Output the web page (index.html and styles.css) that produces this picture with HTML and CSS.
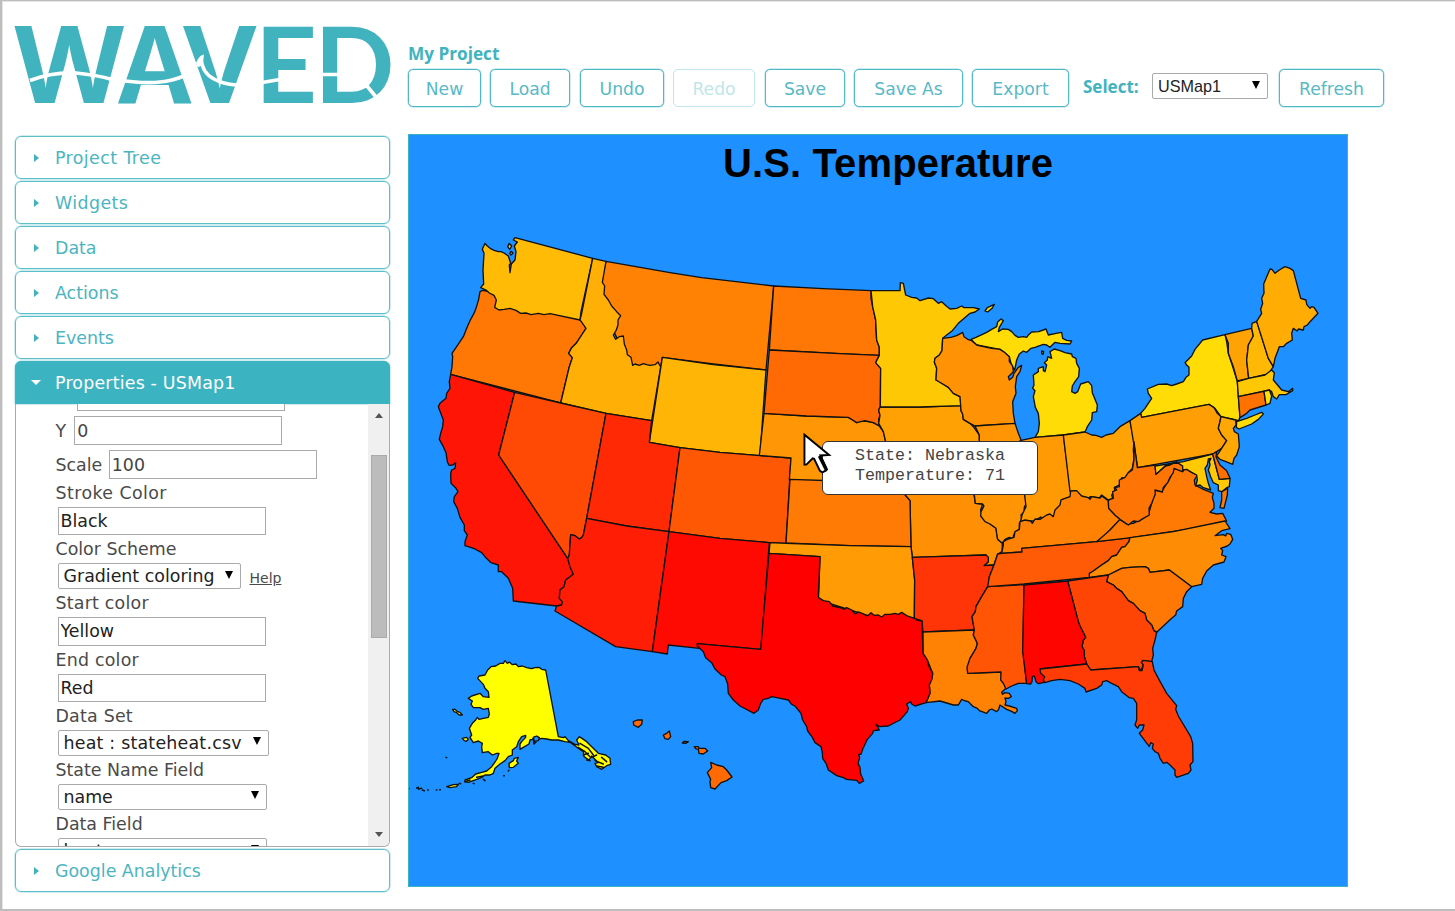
FILE: index.html
```html
<!DOCTYPE html>
<html lang="en">
<head>
<meta charset="utf-8">
<title>WAVED</title>
<link rel="stylesheet" href="styles.css">
</head>
<body>
<div class="page">
  <aside class="sidebar">
    <svg class="logo" viewBox="15 24 376 82" role="img" aria-label="WAVED">
      <g class="logo-text">
        <text class="slanted" x="14.500" y="102.700" textLength="109.500" lengthAdjust="spacingAndGlyphs">W</text>
        <text class="slanted" x="118" y="102.700" textLength="73.500" lengthAdjust="spacingAndGlyphs">A</text>
        <text class="slanted" x="183" y="102.700" textLength="73.500" lengthAdjust="spacingAndGlyphs">V</text>
        <text x="255" y="102.700" textLength="62" lengthAdjust="spacingAndGlyphs">E</text>
        <text x="314.500" y="102.700" textLength="80" lengthAdjust="spacingAndGlyphs">D</text>
      </g>
      <g class="logo-wave">
        <path d="M30 80.500Q52 72 76 73Q97 75 112 79.500Q145 84 160 82Q172 81 184 76"/>
        <path d="M201 58Q202 73 214 79Q223 84 236 85"/>
        <path d="M262 82.500L280 79.500M322 74.500H340M367 86L376 97"/>
      </g>
      <path class="logo-crest" d="M196 63Q199 55 204 54.500L203 62Q200 69 197 66Z"/>
    </svg>
    <nav class="accordion">
      <div class="head wide"><i class="caret"></i>Project Tree</div>
      <div class="head wide"><i class="caret"></i>Widgets</div>
      <div class="head"><i class="caret"></i>Data</div>
      <div class="head"><i class="caret"></i>Actions</div>
      <div class="head"><i class="caret"></i>Events</div>
      <section class="open">
        <div class="head active"><i class="caret down"></i>Properties - USMap1</div>
        <div class="panel">
          <div class="form">
            <div class="row"><input class="x" type="text" value=""></div>
            <div class="row">Y <input class="y" type="text" value="0"></div>
            <div class="row">Scale <input class="scale" type="text" value="100"></div>
            <label class="wide">Stroke Color</label>
            <input type="text" value="Black">
            <label>Color Scheme</label>
            <div class="pair"><div class="select scheme">Gradient coloring<i></i></div><a class="help">Help</a></div>
            <label class="mid">Start color</label>
            <input type="text" value="Yellow">
            <label class="mid">End color</label>
            <input type="text" value="Red">
            <label class="mid">Data Set</label>
            <div class="select dataset mid">heat : stateheat.csv<i></i></div>
            <label>State Name Field</label>
            <div class="select field">name<i></i></div>
            <label>Data Field</label>
            <div class="select field">heat<i></i></div>
          </div>
          <div class="scrollbar"><i class="up"></i><span class="thumb"></span><i class="dn"></i></div>
        </div>
      </section>
      <div class="head"><i class="caret"></i>Google Analytics</div>
    </nav>
  </aside>
  <main class="main">
    <h1 class="project">My Project</h1>
    <div class="toolbar">
      <button class="b-new">New</button>
      <button class="b-load">Load</button>
      <button class="b-undo">Undo</button>
      <button class="b-redo" disabled>Redo</button>
      <button class="b-save">Save</button>
      <button class="b-saveas">Save As</button>
      <button class="b-export">Export</button>
      <b class="pick">Select:</b>
      <div class="select picker">USMap1<i></i></div>
      <button class="b-refresh">Refresh</button>
    </div>
    <div class="canvas">
      <svg class="map" viewBox="409 135 938 751">
        <text class="title" x="723" y="177" textLength="330">U.S. Temperature</text>
        <!-- West -->
        <g class="states" transform="translate(430 220) scale(.33333)">
          <path fill="#ff7805" d="M150 215L158 211 170 213 300 240 455 298 468 325 455 345 440 368 425 383 416 400 427 413 418 440 392 549 62 463 66 440 68 410 66 400 84 374 100 350 112 320 122 298 133 278 138 265 146 238Z"/>
          <path fill="#ffbb05" d="M165 70L172 78 182 86 192 91 205 95 213 95 222 99 235 108 242 130 238 135 240 158 244 132 255 120 258 95 253 78 262 66 250 60 255 53 488 115 453 275 450 300 360 281 342 284 325 280 303 284 288 279 272 280 258 271 240 265 222 268 207 270 194 262 199 240 192 226 178 219 168 210 152 203 161 192 159 150 162 100 157 88ZM238 70L245 78 239 88 233 80ZM243 94L249 99 243 105 239 100Z"/>
          <path fill="#ff8205" d="M528 124L720 158 815 173 1031 198 1008 450 850 432 697 412 692 441 608 450 500 230Z"/>
          <path fill="#ffaf05" d="M488 115L528 124 517 187 524 198 522 223 535 240 545 258 560 275 572 287 564 300 564 315 558 332 550 345 557 358 568 350 580 348 583 372 590 390 592 404 603 412 608 436 615 432 628 436 640 431 650 434 660 436 675 434 684 426 692 441 665 602 528 580 392 549 418 440 427 413 416 400 425 383 440 368 455 345 468 325 456 308 450 300 455 280Z"/>
          <path fill="#ffb505" d="M697 412L850 434 1008 450 990 707 870 697 750 683 658 667Z"/>
          <path fill="#ff1505" d="M62 463L254 517 206 705 413 1015 420 1040 430 1063 407 1080 402 1100 390 1110 388 1135 397 1145 395 1155 380 1158 250 1143 248 1105 235 1075 215 1055 205 1055 205 1035 183 1028 165 1010 155 998 135 987 122 982 105 977 105 965 112 945 103 932 103 915 90 892 82 865 71 845 73 830 84 815 78 805 63 790 62 760 65 750 75 745 77 728 68 735 57 736 52 725 48 698 40 680 28 658 32 640 38 620 40 600 25 560 30 550 48 535 50 520 60 505 58 485Z"/>
          <path fill="#ff4a05" d="M254 517L392 549 528 580 470 895 460 945 455 953 448 957 435 947 422 944 418 1005 413 1015 206 705Z"/>
          <path fill="#ff2a05" d="M528 580L665 602 658 667 750 683 717 935 590 918 470 895Z"/>
          <path fill="#ff5805" d="M750 683L870 697 990 707 1083 714 1068 970 1018 968 870 955 717 935Z"/>
          <path fill="#ff1e05" d="M470 895L590 918 717 935 667 1295 557 1280 375 1173 380 1158 395 1155 397 1145 388 1135 390 1110 402 1100 407 1080 430 1063 420 1040 413 1015 418 1005 422 944 435 947 448 957 455 953 460 945Z"/>
          <path fill="#ff0a02" d="M717 935L870 955 1018 968 993 1288 802 1271 808 1285 715 1275 712 1302 667 1295Z"/>
        </g>
        <!-- Plains, Midwest and Gulf -->
        <g class="states" transform="translate(740 260) scale(.33333)">
          <path fill="#ff7805" d="M101 78L250 86 393 92 393 115 398 140 407 180 408 210 410 240 418 262 418 286 300 281 88 270Z"/>
          <path fill="#ff9605" d="M72 460L200 468 325 472 340 480 350 488 358 484 375 483 400 488 418 498 430 515 437 545 445 600 500 700 148 660 153 594 58 586Z"/>
          <path fill="#ff6a05" d="M88 270L300 281 418 286 407 308 422 325 421 440 416 450 420 466 416 478 418 498 400 488 375 482 350 488 325 472 200 468 72 460Z"/>
          <path fill="#ffa005" d="M421 441L540 441 663 437 663 452 668 462 670 478 690 490 700 500 718 525 720 600 690 650 450 640 437 545 430 515 416 490 420 466 416 450Z"/>
          <path fill="#ff9005" d="M450 640L690 640 703 710 706 730 728 732 722 750 728 775 750 792 768 805 773 838 787 850 786 875 773 882 762 915 732 917 745 905 738 885 517 892 513 860 510 722 495 705Z"/>
          <path fill="#ff7b05" d="M150 658L300 663 490 668 495 705 510 722 513 860 330 857 138 849Z"/>
          <path fill="#ff9b05" d="M90 848L138 850 330 857 513 860 517 892 524 960 523 1075 500 1070 425 1080 235 1020 240 890 87 880Z"/>
          <path fill="#ff3508" d="M517 892L738 885 745 892 745 905 732 917 762 915 748 950 747 970 743 980 725 1010 708 1040 706 1055 696 1070 703 1110 549 1116 546 1083 523 1075 524 960Z"/>
          <path fill="#ff8205" d="M549 1116L703 1110 700 1125 712 1150 708 1165 690 1195 683 1240 783 1236 785 1255 798 1285 785 1297 788 1303 795 1298 808 1300 814 1310 805 1315 795 1314 798 1325 795 1335 808 1338 830 1345 832 1352 825 1360 815 1354 800 1348 780 1335 776 1348 770 1355 755 1347 748 1350 740 1360 718 1352 712 1345 700 1340 685 1325 676 1323 665 1318 655 1335 640 1335 600 1323 558 1328 570 1300 568 1275 578 1240 562 1200 549 1180Z"/>
          <path fill="#f00" d="M87 880L240 890 235 1012 250 1022 268 1025 278 1038 305 1044 312 1048 320 1043 335 1050 346 1062 355 1056 368 1061 382 1068 393 1058 402 1066 415 1065 425 1071 435 1063 450 1063 465 1060 475 1063 485 1057 500 1067 523 1075 530 1080 546 1083 549 1180 562 1200 565 1215 578 1240 576 1258 568 1275 570 1300 558 1328 525 1338 515 1332 512 1325 500 1332 505 1345 502 1355 480 1380 445 1398 418 1400 408 1393 412 1400 418 1410 400 1412 398 1420 382 1438 368 1468 363 1483 356 1483 359 1493 354 1510 360 1522 362 1542 371 1563 358 1570 350 1561 320 1558 310 1553 290 1547 265 1530 258 1510 248 1495 247 1478 243 1460 225 1448 217 1432 203 1413 200 1400 188 1380 183 1360 165 1338 155 1333 145 1320 110 1313 95 1310 85 1315 70 1318 62 1330 55 1350 42 1360 0 1338 -20 1320 -35 1300 -37 1272 -45 1250 -56 1245 -75 1227 -85 1208 -103 1193 -110 1175 -128 1158 -128 1151 62 1168Z"/>
          <path fill="#ff5505" d="M743 980L852 974 849 1170 860 1270 835 1270 815 1278 798 1287 790 1270 782 1260 783 1236 683 1240 681 1222 690 1195 708 1165 712 1150 700 1125 703 1110 696 1070 706 1055 708 1040 725 1010Z"/>
          <path fill="#ffc805" d="M393 92L480 92 481 68 490 70 493 85 497 105 515 112 530 114 540 122 565 114 580 116 595 130 605 125 618 137 630 147 650 145 665 138 672 143 700 143 718 147 705 156 690 160 655 190 637 212 620 225 608 235 606 272 598 285 585 295 583 306 590 325 588 360 600 366 625 382 640 400 660 410 663 437 540 441 421 441 422 325 407 308 418 286 418 262 410 240 407 180 398 140Z"/>
          <path fill="#ffdc05" d="M693 238L708 232 740 217 755 208 770 200 773 186 783 177 790 182 778 202 775 215 788 207 805 208 815 215 825 226 835 232 850 230 860 232 866 224 875 216 896 215 918 207 925 225 948 220 965 217 968 235 980 241 995 243 990 252 960 250 945 247 930 262 920 255 910 253 885 262 873 265 860 277 850 273 838 282 830 300 824 330 815 318 808 290 780 268 710 255ZM735 153L742 143 763 133 757 144 743 156Z"/>
          <path fill="#ff9305" d="M608 235L632 232 650 227 668 217 672 230 683 238 695 242 710 255 730 260 755 265 780 268 795 278 808 290 808 305 818 318 820 335 805 350 808 360 818 352 822 340 835 322 845 316 840 335 830 350 826 380 828 400 818 425 820 460 825 490 705 498 690 490 670 478 668 462 663 452 660 410 640 400 625 382 588 360 590 325 583 306 585 295 598 285 606 272Z"/>
          <path fill="#ff9505" d="M705 498L825 490 835 520 845 545 855 640 855 710 860 728 853 742 852 757 843 765 845 778 838 790 838 808 824 818 820 828 822 838 808 832 795 838 787 850 773 838 770 820 768 805 750 792 735 785 722 768 723 755 732 738 728 732 706 730 703 705 718 620 718 525Z"/>
        </g>
        <!-- Northeast and Great Lakes -->
        <g class="states" transform="translate(1010 250) scale(.33333)">
          <path fill="#ffdc05" d="M120 305L133 297 150 302 165 308 185 312 187 320 198 325 200 340 208 355 206 380 195 395 187 408 185 425 195 430 203 425 212 402 235 395 245 407 247 428 262 465 260 485 247 488 245 510 232 530 225 546 160 555 75 562 85 545 88 520 85 490 76 472 70 440 75 422 68 415 72 405 70 375 85 365 85 355 100 350 100 362 105 365 110 345 103 338 112 330 113 320 125 325ZM95 303L101 305 99 313 95 311Z"/>
          <path fill="#ff9a05" d="M30 572L75 562 160 555 182 725 182 740 155 750 150 770 138 785 130 798 115 796 100 806 92 801 75 812 32 815 36 795 48 770 44 735Z"/>
          <path fill="#ffa205" d="M160 555L225 546 245 555 258 556 275 562 288 555 310 550 330 530 360 512 372 575 370 600 372 625 367 655 355 668 345 685 335 683 328 705 313 712 315 725 305 735 308 745 295 750 275 735 268 744 240 740 235 746 205 735 195 723 180 724Z"/>
          <path fill="#ffdc05" d="M395 502L392 490 405 475 425 445 415 430 412 417 445 403 470 402 485 407 500 402 520 395 528 382 537 375 537 352 530 345 525 338 545 318 555 298 578 270 645 254 650 275 655 310 668 350 682 395 690 500 686 512 677 510 633 500 615 475 597 463ZM680 515L710 505 735 495 755 487 760 492 745 508 725 522 687 537 679 532Z"/>
          <path fill="#ff9f05" d="M360 512L392 490 395 502 597 463 612 473 622 490 633 500 625 535 635 555 650 572 635 595 620 605 610 612 383 653Z"/>
          <path fill="#ffa805" d="M633 500L677 510 678 525 670 535 673 545 685 552 688 590 680 615 672 625 668 643 648 635 630 628 620 618 635 595 650 572 635 555 625 535 630 515Z"/>
          <path fill="#ffa305" d="M645 254L725 235 730 258 715 285 713 305 710 330 716 385 682 393 670 350 655 310 655 280Z"/>
          <path fill="#ffb805" d="M725 235L726 220 740 214 775 325 790 350 775 372 716 385 710 330 713 305 715 285 730 258Z"/>
          <path fill="#ffad05" d="M740 214L755 190 752 178 758 160 755 145 762 130 761 102 780 57 786 58 795 70 808 60 825 50 840 55 850 62 872 145 888 150 890 163 900 175 905 170 912 172 924 190 900 215 892 225 882 230 880 240 865 237 862 243 850 235 845 250 847 270 830 280 820 290 808 290 795 325 790 350 775 325Z"/>
          <path fill="#ffc805" d="M682 395L716 385 765 375 785 360 793 368 790 390 800 402 815 420 835 425 848 415 848 422 828 434 808 434 800 447 790 440 785 425 778 420 685 440Z"/>
          <path fill="#ff7200" d="M685 440L762 424 768 465 720 480 710 490 690 503Z"/>
          <path fill="#ffe005" d="M762 424L778 420 785 438 780 460 768 465Z"/>
        </g>
        <!-- Southeast -->
        <g class="states" transform="translate(1000 440) scale(.33333)">
          <path fill="#ff8205" d="M212 153L230 152 245 168 265 173 270 178 275 170 300 174 305 168 325 182 326 205 345 225 360 238 330 270 315 290 290 305 65 325 66 336 5 340 10 315 10 305 25 297 42 292 45 275 58 268 60 245 75 240 92 243 97 250 105 237 120 238 140 225 150 222 160 230 165 210 180 195 183 180 210 170Z"/>
          <path fill="#ff5a05" d="M5 340L66 336 65 325 290 305 390 293 387 305 375 320 365 322 350 345 335 350 325 362 305 375 280 393 268 412 72 432 -37 440 -32 410 -18 375 -7 342Z"/>
          <path fill="#ff7a05" d="M522 85L548 95 555 83 575 97 592 105 583 120 585 135 610 148 640 160 637 172 642 190 642 205 630 217 650 222 668 220 680 243 560 268 400 292 290 305 330 270 360 238 380 252 400 250 445 225 455 190 465 150 485 155 510 115ZM665 155L683 145 682 165 672 205 660 203 665 180Z"/>
          <path fill="#ff7505" d="M402 5L412 83 465 75 468 103 500 75 530 66 548 78 548 95 535 90 522 85 520 98 510 112 503 128 490 142 487 156 465 150 466 162 455 190 447 205 448 225 430 235 415 245 400 243 385 255 360 238 345 225 326 205 325 182 330 178 340 175 338 155 350 150 345 143 358 140 358 120 375 112 385 98 397 90 402 60Z"/>
          <path fill="#ff8c05" d="M390 293L520 275 675 243 690 266 665 272 645 287 670 284 677 288 680 280 692 283 698 298 690 312 682 318 662 325 668 332 665 345 678 350 672 366 640 375 620 393 608 415 605 433 575 440 508 390 450 397 445 385 435 380 390 382 365 385 325 405 268 412 268 400 280 393 305 375 325 362 335 350 350 345 365 322 375 320 387 305Z"/>
          <path fill="#ff7805" d="M325 405L365 385 390 382 435 380 445 385 450 397 508 390 575 440 560 455 550 475 548 500 530 513 527 525 515 535 470 577 462 572 455 555 440 540 435 520 420 512 400 490 385 482 365 455 350 445 340 435 320 425Z"/>
          <path fill="#ff4505" d="M203 423L325 405 320 425 340 435 350 445 365 455 385 482 400 490 420 512 435 520 440 540 455 555 462 572 470 577 465 600 458 625 460 645 455 665 428 662 430 675 422 692 415 680 272 690 260 672 253 650 253 632 246 620 250 600 257 592 240 558 235 545Z"/>
          <path fill="#ff0500" d="M72 435L203 423 235 545 240 558 257 592 250 600 246 620 253 632 253 650 260 672 120 687 135 710 130 728 115 731 108 725 103 708 97 710 96 725 92 732 80 731 68 635Z"/>
          <path fill="#ff3c05" d="M120 687L260 672 272 690 415 680 418 692 426 692 430 675 424 667 430 661 457 665 462 690 475 715 500 760 530 797 527 808 535 828 572 890 578 910 579 965 570 975 573 990 565 1000 530 1012 525 1005 525 990 510 975 500 967 490 970 480 955 475 940 465 935 457 925 460 912 452 908 448 920 418 880 428 870 432 855 418 855 413 865 405 855 410 840 410 790 400 775 388 773 365 755 355 740 335 730 320 722 308 725 305 735 290 745 258 756 255 745 235 732 210 722 180 718 155 722 135 728 130 720 134 710 122 700Z"/>
          <path fill="#ffc905" d="M465 78L550 65 638 42 658 118 690 115 688 140 680 143 665 155 655 152 655 135 640 128 632 110 625 90 630 75 628 65 633 55 625 57 622 75 615 85 620 110 625 130 632 150 610 143 600 135 587 138 592 120 590 105 575 97 560 88 548 90 548 78 530 66 510 75 495 78 468 103Z"/>
          <path fill="#ff7000" d="M638 42L650 35 648 50 660 75 680 92 690 115 658 118Z"/>
        </g>
        <!-- Alaska and Hawaii -->
        <g class="states" transform="translate(405 640) scale(.33333)">
          <path fill="#ff0" d="M300 62L307 70 313 66 322 74 333 72 340 80 352 78 365 83 380 86 390 83 402 82 410 88 422 90 460 290 475 293 480 290 490 302 510 313 522 315 515 300 523 290 545 305 580 340 602 345 615 355 617 373 605 377 590 388 575 380 570 370 580 368 560 348 552 360 537 350 535 335 520 325 495 307 480 305 460 300 440 300 425 297 410 295 402 297 390 290 382 298 375 300 372 312 355 322 345 328 345 312 350 305 362 292 362 286 350 290 340 305 335 320 322 330 322 345 310 350 300 362 285 372 270 385 265 400 255 405 240 405 230 412 215 418 190 427 180 425 180 420 200 413 212 402 230 397 245 393 260 380 270 366 277 355 282 340 275 340 262 345 250 335 232 338 230 320 232 310 220 303 205 308 195 292 200 285 193 265 202 250 212 240 217 232 222 238 235 235 250 232 253 222 250 205 235 208 225 203 205 203 198 193 202 183 190 175 200 168 225 160 235 170 252 172 250 155 240 145 235 133 218 115 222 108 240 105 248 90 258 80 272 78 285 70 295 70Z"/>
          <path fill="#ff0" d="M143 208L150 208 158 215 165 217 172 225 163 225 155 218 147 215ZM172 295L185 292 190 298 184 304 178 302ZM312 370L325 362 328 355 340 352 335 363 340 370 325 382 313 383ZM125 440L145 434 160 433 155 440 135 443Z"/>
          <path class="islets" d="M10 445L12 446M35 444L40 442M40 447L50 445M52 450L58 452M68 450L70 450M94 450L96 450M104 449L106 449M123 352L125 353M163 430L167 431M205 430L207 431M235 418L240 422M296 407L298 407M310 393L312 391M385 298L387 312 393 306M520 322L540 335 555 350M525 310L550 325 565 345M535 345L550 340M560 352L575 345M570 362L595 372M590 352L605 365M545 360L555 362M575 378L595 382M180 425L195 420M215 412L235 408"/>
          <path fill="#1e90ff" d="M385 292L395 288 403 293 400 302 388 304Z"/>
          <path fill="#ff6a05" d="M685 245L697 240 712 240 710 253 700 262 686 255ZM775 285L785 280 793 273 797 290 790 298 780 296ZM832 309L837 304 850 305 843 310ZM868 320L880 320 882 325 900 325 908 333 895 342 882 340 880 328 872 326ZM917 367L935 375 955 380 965 390 981 411 965 422 948 428 930 447 917 443 915 425 917 418 907 398 920 383Z"/>
        </g>
      </svg>
      <div class="tip">State: Nebraska<br>Temperature: 71</div>
      <svg class="cursor" viewBox="0 0 30 43">
        <path d="M1.500 1.500V32.500H3.500L10 26 11.500 26.500 17.500 39 20 40.500 24 38.500V36L18 23 27 22.500Z"/>
        <path class="edge" d="M17 23.500L24.500 38.500"/>
      </svg>
    </div>
  </main>
</div>
</body>
</html>
```
FILE: styles.css
```css
* { box-sizing: border-box; }
body {
  margin: 0;
  background: #fff;
  font: 17.4px "DejaVu Sans", sans-serif;
  color: #4a4a4a;
}
.page {
  width: 1455px;
  height: 911px;
  display: flex;
  align-items: flex-start;
  overflow: hidden;
  border: solid #bdbdbd;
  border-width: 1px 0 2px 2px;
  box-shadow: inset 1px 1px #e5e5e5;
}
.sidebar { width: 375px; margin: 23px 0 0 13px; flex: none; }
.logo { display: block; width: 376px; height: 82px; overflow: visible; }
.logo-text { font: 700 106px Lato, sans-serif; fill: #40b3bf; }
.logo-text .slanted { font: 700 107px "Open Sans", sans-serif; }
.logo-wave path { fill: none; stroke: #fff; stroke-width: 3.6; }
.logo-crest { fill: #fff; }

.accordion { margin-top: 30px; display: flex; flex-direction: column; gap: 2px; }
.wide { letter-spacing: .42px; }
.mid { letter-spacing: .22px; }
.head {
  height: 43px;
  border: 1.500px solid #5bbfc9;
  box-shadow: 0 0 0 .5px #a5dce2;
  border-radius: 6px;
  display: flex;
  align-items: center;
  padding-left: 18px;
  color: #4bb5c1;
}
.caret {
  width: 5px;
  margin-right: 16px;
  border: solid transparent;
  border-width: 4.500px 0 4.500px 5px;
  border-left-color: #40b3bf;
}
.head.active {
  background: #3cb3c0;
  color: #fff;
  border-color: #3cb3c0;
  border-radius: 6px 6px 0 0;
  padding-left: 15px;
  letter-spacing: .2px;
}
.caret.down {
  width: 10px;
  margin-right: 14px;
  border-width: 5px 5px 0;
  border-color: #fff transparent transparent;
}
.open { height: 486px; }
.panel {
  height: 443px;
  display: flex;
  justify-content: space-between;
  overflow: hidden;
  border: 1px solid #aaa;
  border-top: 0;
  border-radius: 0 0 6px 6px;
}
.form { margin: -22px 0 0 39.500px; display: flex; flex-direction: column; align-items: flex-start; flex: none; }
.row { height: 29px; margin-bottom: 5px; display: flex; align-items: center; }
.row:nth-child(3) { margin: 0; }
input, .select {
  font: inherit;
  color: #222;
  background: #fff;
  border: 1.500px solid #aaa;
  flex: none;
}
input { width: 208px; height: 28.300px; padding: 0 2px; margin-left: 2px; outline: 0; }
.row input { height: 29px; color: #444; }
.row .x { margin-left: 21px; }
.row .y { margin-left: 8px; }
.row .scale { margin-left: 6.500px; }
label { height: 28px; line-height: 28px; }
.select {
  height: 26px;
  margin-left: 2px;
  border-radius: 2px;
  padding: 0 7px 0 5px;
  display: flex;
  align-items: center;
  justify-content: space-between;
  white-space: nowrap;
}
.select i { border: solid transparent; border-width: 8px 4px 0; border-top-color: #000; margin-top: -3px; }
.scheme { width: 183px; }
.dataset { width: 211px; }
.field { width: 209px; }
.pair { display: flex; align-items: center; }
.help { font-size: 14px; margin-left: 9px; text-decoration: underline; padding-top: 3px; }
.scrollbar {
  width: 21px;
  height: 443px;
  background: #f0f0f0;
  display: flex;
  flex-direction: column;
  align-items: center;
  flex: none;
}
.scrollbar i { border: solid transparent; border-width: 0 4.500px 5px; border-bottom-color: #555; margin-top: 9px; }
.thumb { width: 16px; height: 183px; margin-top: 37px; background: #bcbcbc; border: 1px solid #aaa; }
.scrollbar .dn { border-width: 5px 4.500px 0; border-color: #555 transparent; margin-top: 194px; }

.main { margin: 41px 0 0 18px; }
.project { margin: 0; font: bold 17.200px/24px "Open Sans", sans-serif; color: #40b3bf; }
.toolbar { display: flex; margin-top: 3px; height: 38px; }
button {
  height: 38px;
  padding: 2px 0 0;
  font: 17.200px "DejaVu Sans", sans-serif;
  color: #58b9c7;
  background: #fff;
  border: 1.500px solid #4fbac5;
  border-radius: 5px;
  box-shadow: 0 0 0 .5px #a5dce2;
}
button:disabled { color: #bfe6ea; border-color: #bfe6ea; box-shadow: none; }
.b-new { width: 73px; }
.b-load { width: 80px; margin-left: 9px; }
.b-undo { width: 84px; margin-left: 10px; }
.b-redo { width: 82px; margin-left: 9px; }
.b-save { width: 80px; margin-left: 10px; }
.b-saveas { width: 109px; margin-left: 9px; }
.b-export { width: 97px; margin-left: 9px; }
.pick { width: 83px; padding-left: 14px; font: bold 17px/35px "Open Sans", sans-serif; color: #40b3bf; }
.picker { width: 116px; height: 26px; margin: 4px 0 0; font: 16.200px "Liberation Sans", sans-serif; }
.b-refresh { width: 105px; margin-left: 11px; }

.canvas {
  position: relative;
  width: 940px;
  height: 753px;
  margin-top: 27px;
  background: #1e90ff;
  border: 1px solid #3cb3c0;
}
.map { display: block; width: 938px; height: 751px; }
.title { font: bold 40px "Liberation Sans", sans-serif; fill: #000; }
.states path { stroke: #111; stroke-width: 4; stroke-linejoin: round; }
.states .islets { fill: none; stroke-width: 4.500; stroke-linecap: round; }
.tip {
  position: absolute;
  left: 413px;
  top: 306px;
  width: 216px;
  height: 54px;
  padding: 4px 0 0 32px;
  font: 16.670px/20px "Liberation Mono", monospace;
  color: #444;
  background: #fff;
  border: 1.500px solid #333;
  border-radius: 6px;
}
.cursor { position: absolute; left: 394px; top: 298px; width: 29px; height: 42px; }
.cursor path { fill: #fff; stroke: #000; stroke-width: 2; }
.cursor .edge { stroke-width: 3.500; }
```
